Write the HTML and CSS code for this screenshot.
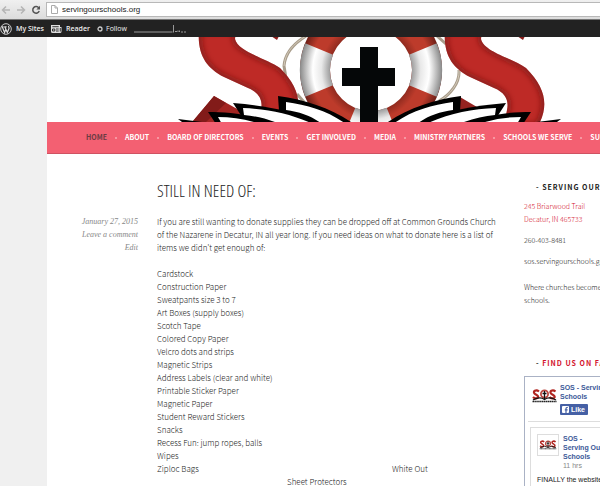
FILE: index.html
```
<!DOCTYPE html>
<html lang="en">
    <head>
        <meta charset="UTF-8" />
        <meta name="viewport" content="width=device-width, initial-scale=1.0" />
        <title>Serving Our Schools</title>
        <link rel="stylesheet" href="styles.css">
    </head>

    <body>
        <div class="browser">
            <button class="browser_btn" aria-label="Back">
                <svg width="10" height="10" viewBox="0 0 10 10"><path d="M9 5H2M5 1.500L1.500 5L5 8.500" /></svg>
            </button>
            <button class="browser_btn" aria-label="Forward">
                <svg width="10" height="10" viewBox="0 0 10 10"><path d="M1 5H8M5 1.500L8.500 5L5 8.500" /></svg>
            </button>
            <button class="browser_btn browser_btn--reload" aria-label="Reload">
                <svg width="10" height="10" viewBox="0 0 10 10"><path d="M7.800 3A3.300 3.300 0 1 0 8.200 6" /><path class="solid" d="M9 0.800V4.400H5.400z" /></svg>
            </button>
            <div class="address">
                <svg width="7" height="9" viewBox="0 0 7 9"><path d="M0.500 0.500H4L6.500 3V8.500H0.500zM4 0.500V3H6.500" /></svg>
                <input class="address_input" type="text" value="servingourschools.org" aria-label="Address" />
            </div>
        </div>

        <div class="adminbar">
            <a href="#" class="adminbar_link">
                <svg width="12" height="12" viewBox="0 0 12 12">
                    <circle cx="6" cy="6" r="5.300" fill="none" stroke="#ddd" stroke-width="0.900" />
                    <path d="M2.200 3.800L4.600 9.600L6 5.800M4.800 3.800L7.300 9.600L9 5.600C9.400 4.600 8.300 4 8.600 2.800M1.700 3.800H3.600M4.200 3.800H6.600" fill="none" stroke="#ddd" stroke-width="1.200" />
                </svg>
                My Sites
            </a>
            <a href="#" class="adminbar_link">
                <svg width="11" height="10" viewBox="0 0 11 10">
                    <path d="M0 1H9V3H10.500V7.500Q10.500 9 9 9H1.500Q0 9 0 7.500z" fill="#ddd" />
                    <path d="M1.300 2.700H7.700M1.500 5H3.800V7H1.500zM5 5H7.700M5 7H7.700M9.300 4V7.500" fill="none" stroke="#222" stroke-width="0.900" />
                </svg>
                Reader
            </a>
            <a href="#" class="adminbar_link adminbar_link--follow">
                <svg width="6" height="6" viewBox="0 0 6 6"><circle cx="3" cy="3" r="2" fill="none" stroke="#ccc" stroke-width="1.300" /></svg>
                Follow
            </a>
            <svg class="stats" width="52" height="9" viewBox="0 0 52 9"><path d="M0 8H38.500M39.500 1V8.500M41 7.500H43M44 6.500V8M45.500 6.500V8M47 8H49M50 8H52" /></svg>
        </div>

        <div class="page">
            <svg class="banner" viewBox="47 37 553 85" preserveAspectRatio="xMidYMid slice" role="img" aria-label="SOS">
                <defs>
                    <radialGradient id="ringRed" gradientUnits="userSpaceOnUse" cx="371" cy="70" r="71">
                        <stop offset="0.570" stop-color="#8e2a1e" />
                        <stop offset="0.700" stop-color="#bd3b2b" />
                        <stop offset="0.850" stop-color="#bd3b2b" />
                        <stop offset="1" stop-color="#6e2018" />
                    </radialGradient>
                    <radialGradient id="ringWhite" gradientUnits="userSpaceOnUse" cx="371" cy="70" r="71">
                        <stop offset="0.570" stop-color="#999" />
                        <stop offset="0.700" stop-color="#e8e8e8" />
                        <stop offset="0.820" stop-color="#fff" />
                        <stop offset="1" stop-color="#8a8a8a" />
                    </radialGradient>
                    <filter id="soft" x="-20%" y="-20%" width="140%" height="140%">
                        <feGaussianBlur stdDeviation="3" />
                    </filter>
                    <path id="sShape" d="M199 30C197 54 206 68 224 77L248 88C260 93 263 101 261 110L258 126H292C303 106 300 88 280 68C266 58 238 52 235 39L236 30Z" />
                    <clipPath id="sClip"><use href="#sShape" /></clipPath>
                    <g id="letterS">
                        <use href="#sShape" fill="#be2a26" />
                        <g clip-path="url(#sClip)">
                            <use href="#sShape" fill="none" stroke="#6b1513" stroke-width="4" filter="url(#soft)" />
                        </g>
                        <path d="M271 36L277 40L279 36z" fill="#8a1d1b" />
                    </g>
                    <g id="pages">
                        <path d="M178 119L202 122H182z" fill="#000" />
                        <path d="M208 112C228 112 250 114 278 124H216z" fill="#000" />
                        <path d="M218 117C232 117 246 119 260 124H222z" fill="#fff" />
                        <path d="M233 103C268 106 295 111 322 124H272L242 117z" fill="#000" />
                        <path d="M243 108C268 109 292 114 313 124H280C268 119 256 116 244 115z" fill="#fff" />
                        <path d="M278 96C306 100 331 108 354 124H314C304 117 292 113 279 111z" fill="#000" />
                        <path d="M286 102C308 105 328 111 346 124H322C312 116 300 112 286 110z" fill="#fff" />
                    </g>
                </defs>
                <g fill="none" stroke="#a89c8a" stroke-width="3">
                    <path d="M306 36C293 44 285 53 284 66L286 78M297 94L304 102M437 36L446 44M459 70C460 83 450 95 439 101" />
                    <path d="M306 36C293 44 285 53 284 66M459 70C460 83 450 95 439 101" stroke="#d2c9b9" stroke-width="1" />
                </g>
                <path d="M214 96L239 110L250 125H190z" fill="#a32522" />
                <path d="M214 96L226 103L206 122H192z" fill="#821b19" />
                <path d="M460 97L482 110L460 122z" fill="#962320" />
                <use href="#letterS" />
                <use href="#letterS" x="246" />
                <circle cx="371" cy="70" r="56" fill="none" stroke="url(#ringRed)" stroke-width="30" />
                <!-- white bands of the lifebuoy -->
                <g fill="none" stroke="url(#ringWhite)" stroke-width="30">
                    <path d="M319.100 49A56 56 0 0 0 319.100 91" />
                    <path d="M422.900 49A56 56 0 0 1 422.900 91" />
                    <path d="M349.600 121.700A56 56 0 0 0 392.400 121.700" />
                </g>
                <use href="#pages" />
                <use href="#pages" transform="translate(739 0) scale(-1 1)" />
                <path d="M360 47H378V68H395V86H378V124H360V86H342V68H360z" fill="#050708" />
            </svg>

            <nav class="menu">
                <a href="#" class="menu_link menu_link--current">Home</a>
                <a href="#" class="menu_link">About</a>
                <a href="#" class="menu_link">Board of Directors</a>
                <a href="#" class="menu_link">Events</a>
                <a href="#" class="menu_link">Get Involved</a>
                <a href="#" class="menu_link">Media</a>
                <a href="#" class="menu_link">Ministry Partners</a>
                <a href="#" class="menu_link">Schools We Serve</a>
                <a href="#" class="menu_link">Supplies</a>
            </nav>

            <div class="content">
                <div class="meta">
                    <a href="#">January 27, 2015</a>
                    <a href="#">Leave a comment</a>
                    <a href="#">Edit</a>
                </div>

                <article class="entry">
                    <h1 class="entry_title">Still in need of:</h1>
                    <p>If you are still wanting to donate supplies they can be dropped off at Common Grounds Church of the Nazarene in Decatur, IN all year long. If you need ideas on what to donate here is a list of items we didn’t get enough of:</p>
                    <ul class="supplies">
                        <li>Cardstock</li>
                        <li>Construction Paper</li>
                        <li>Sweatpants size 3 to 7</li>
                        <li>Art Boxes (supply boxes)</li>
                        <li>Scotch Tape</li>
                        <li>Colored Copy Paper</li>
                        <li>Velcro dots and strips</li>
                        <li>Magnetic Strips</li>
                        <li>Address Labels (clear and white)</li>
                        <li>Printable Sticker Paper</li>
                        <li>Magnetic Paper</li>
                        <li>Student Reward Stickers</li>
                        <li>Snacks</li>
                        <li>Recess Fun: jump ropes, balls</li>
                        <li>Wipes</li>
                        <li class="supplies_row"><span>Ziploc Bags</span><span class="supplies_last">White Out</span></li>
                        <li class="supplies_row"><span class="supplies_mid">Sheet Protectors</span></li>
                    </ul>
                </article>

                <aside class="sidebar">
                    <section class="widget">
                        <h2 class="widget_title">- Serving Our Schools -</h2>
                        <p><a href="#">245 Briarwood Trail<br>Decatur, IN 465733</a></p>
                        <p>260-403-8481</p>
                        <p class="widget_mail">sos.servingourschools.gmail.com</p>
                        <p>Where churches become<br>schools.</p>
                    </section>

                    <section class="widget">
                        <h2 class="widget_title widget_title--link"><span>-</span> <a href="#">Find us on Facebook</a></h2>
                        <div class="fb">
                            <div class="fb_head">
                                <svg class="fb_logo" width="25" height="15" viewBox="0 0 25 15">
                                    <g id="miniLogo">
                                        <path d="M7 3.500C4 1 0.500 3.500 2.500 5.500C4 7 7 7 6 9.500C5 11 2.500 10.500 1 9M23.500 3.500C20.500 1 17 3.500 19 5.500C20.500 7 23.500 7 22.500 9.500C21.500 11 19 10.500 17.500 9" fill="none" stroke="#b02520" stroke-width="2.200" />
                                        <circle cx="12.500" cy="6" r="3.600" fill="none" stroke="#b9473f" stroke-width="1.800" />
                                        <path d="M12.500 3V12M10.500 5.500H14.500M1 12Q8 8 12.500 11.500Q17 8 24 12" fill="none" stroke="#111" stroke-width="1.300" />
                                        <path d="M0.500 13.500H24.500" stroke="#222" stroke-width="1.300" stroke-dasharray="1.500 0.400" />
                                    </g>
                                </svg>
                                <div>
                                    <a href="#" class="fb_name">SOS - Serving Our<br>Schools</a>
                                    <button class="fb_like">
                                        <svg width="7" height="7" viewBox="0 0 7 7"><rect width="7" height="7" rx="1" fill="#fff" /><path d="M4 7V2.500Q4 1.300 5.800 1.500M2.800 3.800H5.600" fill="none" stroke="#4560a5" stroke-width="1.200" /></svg>
                                        Like
                                    </button>
                                </div>
                            </div>
                            <div class="fb_post">
                                <div class="fb_author">
                                    <svg class="fb_avatar" width="22" height="22" viewBox="-2 -4 29 24"><use href="#miniLogo" /></svg>
                                    <div>
                                        <a href="#" class="fb_name">SOS -<br>Serving Our<br>Schools</a>
                                        <span class="fb_time">11 hrs</span>
                                    </div>
                                </div>
                                <p class="fb_text">FINALLY the website</p>
                            </div>
                        </div>
                    </section>
                </aside>
            </div>
        </div>
    </body>
</html>
```

FILE: styles.css
```
* {
    box-sizing: border-box;
}

body {
    display: flex;
    flex-direction: column;
    margin: 0;
    height: 100vh;
    overflow: hidden;
    background-color: #f0f0f0;
    color: #222;
    font-family: "Noto Sans CJK JP", "Noto Sans", sans-serif;
    font-size: 8px;
    font-weight: 300;
    line-height: 13px;
}

a {
    color: inherit;
    text-decoration: none;
}

p,
h1,
h2,
ul {
    margin: 0;
    padding: 0;
}

button {
    font: inherit;
    border: 0;
    padding: 0;
    background: none;
}

svg {
    display: block;
    flex-shrink: 0;
}

/* browser toolbar */
.browser {
    display: flex;
    flex-shrink: 0;
    align-items: center;
    gap: 5px;
    height: 20px;
    padding: 0 0 0 1px;
    background-image: linear-gradient(#f0f0f0, #dcdcdc);
    border-bottom: 1px solid #777;
}
.browser_btn svg {
    fill: none;
    stroke: #b5b5b5;
    stroke-width: 1.5;
}
.browser_btn--reload svg {
    stroke: #555;
}
.browser_btn .solid {
    fill: #555;
    stroke: none;
}
.address {
    display: flex;
    align-items: center;
    gap: 4px;
    flex: 1;
    height: 15px;
    padding-left: 4px;
    background-color: #fff;
    border: 1px solid #b8b8b8;
    border-right: 0;
}
.address svg {
    fill: #fff;
    stroke: #aaa;
    stroke-width: 1;
}
.address_input {
    flex: 1;
    min-width: 0;
    border: 0;
    padding: 0;
    outline: 0;
    color: #222;
    background: none;
    font-family: "Liberation Sans", Arial, sans-serif;
    font-size: 8px;
}

/* wordpress bar */
.adminbar {
    display: flex;
    flex-shrink: 0;
    align-items: center;
    gap: 7px;
    height: 17px;
    background-color: #222;
    color: #eee;
    font-family: "Open Sans", sans-serif;
    font-size: 7px;
    font-weight: 600;
}
.adminbar_link {
    display: flex;
    align-items: center;
    gap: 4px;
}
.adminbar_link--follow {
    gap: 3px;
    font-weight: 400;
}
.stats {
    fill: none;
    stroke: #999;
    stroke-width: 1;
}

.page {
    flex: 1;
    min-height: 0;
    margin-left: 47px;
    background-color: #fff;
    overflow: hidden;
}
.banner {
    width: 100%;
}

.menu {
    display: flex;
    align-items: center;
    height: 32px;
    padding-left: 39px;
    background-color: #f36072;
    border-bottom: 1px solid #cf5262;
    color: #fff;
    font-size: 7px;
    font-weight: 700;
    text-transform: uppercase;
    white-space: nowrap;
}
.menu_link {
    display: flex;
    align-items: center;
}
.menu_link + .menu_link::before {
    content: "";
    width: 2px;
    height: 2px;
    margin: 0 8px;
    border-radius: 50%;
    background-color: #f9aab3;
}
.menu_link--current {
    color: #6b3c44;
}

.content {
    display: grid;
    grid-template-columns: 91px minmax(0, 1fr) 76px;
    padding-top: 27px;
}

.meta {
    display: flex;
    flex-direction: column;
    align-items: flex-end;
    padding-top: 34px;
    color: #888;
    font-family: "Liberation Serif", serif;
    font-size: 8px;
    font-style: italic;
    font-weight: 400;
}

.entry {
    padding: 0 22px 0 19px;
}
.entry_title {
    margin-bottom: 14px;
    color: #222;
    font-family: "Open Sans Condensed Light", "Roboto Condensed", sans-serif;
    font-size: 17px;
    font-weight: 300;
    line-height: 20px;
    text-transform: uppercase;
}
.supplies {
    margin-top: 13px;
    list-style: none;
}
.supplies_row {
    display: grid;
    grid-template-columns: 130px 105px 1fr;
}
.supplies_mid {
    grid-column: 2;
}
.supplies_last {
    grid-column: 3;
}

.sidebar {
    font-size: 7px;
    white-space: nowrap;
}
.widget {
    margin-bottom: 50px;
}
.widget p {
    margin-bottom: 8px;
}
.widget .widget_mail {
    margin-bottom: 13px;
}
.widget p a,
.widget_title--link a {
    color: #d3122c;
}
.widget_title {
    padding-left: 12px;
    margin-bottom: 6px;
    font-size: 7px;
    font-weight: 700;
    letter-spacing: 1px;
    text-transform: uppercase;
}

.fb {
    width: 150px;
    padding: 6px 3px 0;
    border: 1px solid #aab2c5;
    color: #222;
    font-family: "Liberation Sans", Arial, sans-serif;
    font-weight: 400;
    line-height: 9px;
}
.fb_head {
    display: flex;
    gap: 3px;
    padding: 0 4px 6px;
    border-bottom: 1px solid #ddd;
}
.fb_logo {
    margin-top: 5px;
}
.fb_name {
    display: block;
    color: #3b5998;
    font-weight: 700;
}
.fb_like {
    display: flex;
    align-items: center;
    gap: 2px;
    height: 11px;
    margin-top: 3px;
    padding: 0 3px 0 2px;
    border-radius: 1px;
    background-color: #4560a5;
    color: #fff;
    font-weight: 700;
}
.fb_post {
    margin: 5px 2px 0;
    padding: 6px;
    border: 1px solid #ddd;
}
.fb_author {
    display: flex;
    gap: 4px;
}
.fb_avatar {
    border: 1px solid #ddd;
}
.fb_time {
    color: #888;
}
.fb_text {
    margin-top: 5px;
}
```
